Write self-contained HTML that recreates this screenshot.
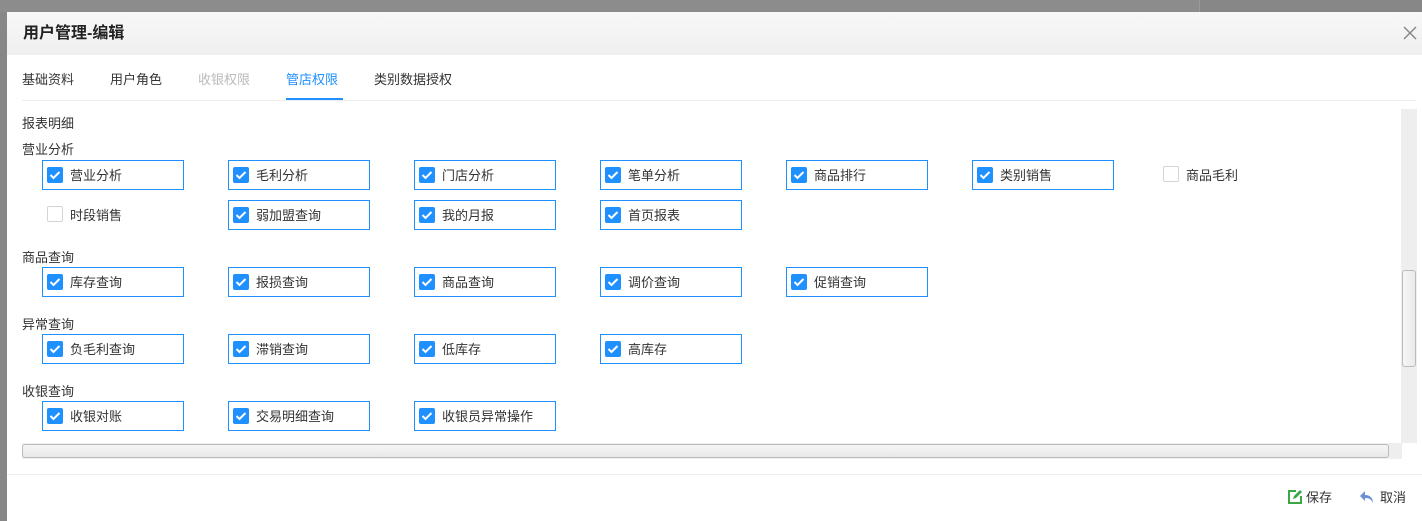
<!DOCTYPE html>
<html><head><meta charset="utf-8"><style>
*{box-sizing:border-box;margin:0;padding:0}
body{width:1422px;height:521px;overflow:hidden;background:#878787;font-family:"Liberation Sans","Noto Sans CJK SC",sans-serif;font-size:13px;color:#333;position:relative}
.dlg{position:absolute;left:7px;top:12px;width:1415px;height:509px;background:#fff}
.hd{height:43px;background:linear-gradient(#f8f8f8,#efefef);font-size:16px;font-weight:bold;color:#222;padding-left:16px;line-height:43px}
.x{position:absolute;right:4px;top:13px;width:16px;height:16px}
.abs{position:absolute;white-space:nowrap}
.tab{top:57px;font-size:13px}
.item{position:absolute;width:142px;height:30px;border:1px solid #1e90ff}
.item.nb{border-color:transparent}
.cb{position:absolute;left:4px;top:6px;width:16px;height:16px;background:#1e90ff;border-radius:2px}
.cb svg{position:absolute;left:2px;top:3px}
.nb .cb{background:#fff;border:1px solid #d4d4d4;width:16px;height:16px;top:5px}
.item span{position:absolute;left:27px;top:4px;font-size:13px;color:#333}
.lbl{position:absolute;left:15px;font-size:13px}
</style></head><body>
<div class="abs" style="left:0;top:0;width:1200px;height:12px;background:#8c8c8c;border-right:1px solid #999"></div>
<div class="dlg">
<div class="hd">用户管理-编辑</div>
<svg class="x" viewBox="0 0 16 16"><path d="M2 2L14 14M14 2L2 14" stroke="#888" stroke-width="1.5"/></svg>
<div class="abs tab" style="left:15px">基础资料</div>
<div class="abs tab" style="left:103px">用户角色</div>
<div class="abs tab" style="left:191px;color:#bbb">收银权限</div>
<div class="abs tab" style="left:279px;color:#1e90ff">管店权限</div>
<div class="abs tab" style="left:367px">类别数据授权</div>
<div class="abs" style="left:279px;top:86px;width:57px;height:2px;background:#1e90ff"></div>
<div class="abs" style="left:15px;top:88px;width:1394px;height:1px;background:#eee"></div>
<div class="lbl" style="top:101px">报表明细</div>
<div class="lbl" style="top:127px">营业分析</div>
<div class="lbl" style="top:235px">商品查询</div>
<div class="lbl" style="top:302px">异常查询</div>
<div class="lbl" style="top:369px">收银查询</div>
<div id="items"></div>
<div class="abs" style="left:1394px;top:97px;width:16px;height:334px;background:#eee"></div>
<div class="abs" style="left:1395px;top:258px;width:14px;height:97px;background:linear-gradient(90deg,#f6f6f6,#eaeaea);border:1px solid #bbb;border-radius:3px"></div>
<div class="abs" style="left:15px;top:431px;width:1380px;height:16px;background:#eee"></div>
<div class="abs" style="left:15px;top:432px;width:1367px;height:14px;background:linear-gradient(#f6f6f6,#e8e8e8);border:1px solid #bbb;border-radius:3px"></div>
<div class="abs" style="left:0;top:462px;width:1415px;height:1px;background:#eee"></div>
<svg class="abs" style="left:1280px;top:477px" width="16" height="16" viewBox="0 0 16 16"><path d="M9 2H2v12h12V7" fill="none" stroke="#3aa845" stroke-width="2"/><path d="M6 10l1-3 6-6 2 2-6 6z" fill="#3aa845"/></svg>
<div class="abs" style="left:1299px;top:475px;font-size:13px">保存</div>
<svg class="abs" style="left:1352px;top:478px" width="16" height="14" viewBox="0 0 16 14"><path d="M6 1L1 6l5 5V8c4 0 6 1 8 5 0-5-3-8-8-8z" fill="#6d8fd6"/></svg>
<div class="abs" style="left:1373px;top:475px;font-size:13px">取消</div>
</div>
<script>
var rows=[[148,["营业分析","毛利分析","门店分析","笔单分析","商品排行","类别销售","商品毛利*"]],[188,["时段销售*","弱加盟查询","我的月报","首页报表"]],[255,["库存查询","报损查询","商品查询","调价查询","促销查询"]],[322,["负毛利查询","滞销查询","低库存","高库存"]],[389,["收银对账","交易明细查询","收银员异常操作"]]];
var h="";rows.forEach(function(r){r[1].forEach(function(t,i){var nb=t.indexOf("*")>=0;t=t.replace("*","");h+='<div class="item'+(nb?' nb':'')+'" style="left:'+(35+i*186)+'px;top:'+r[0]+'px"><div class="cb">'+(nb?'':'<svg width="12" height="10" viewBox="0 0 12 10"><path d="M1.5 5l3 3 6-6" fill="none" stroke="#fff" stroke-width="2"/></svg>')+'</div><span>'+t+'</span></div>';});});
document.getElementById("items").innerHTML=h;
</script>
</body></html>
